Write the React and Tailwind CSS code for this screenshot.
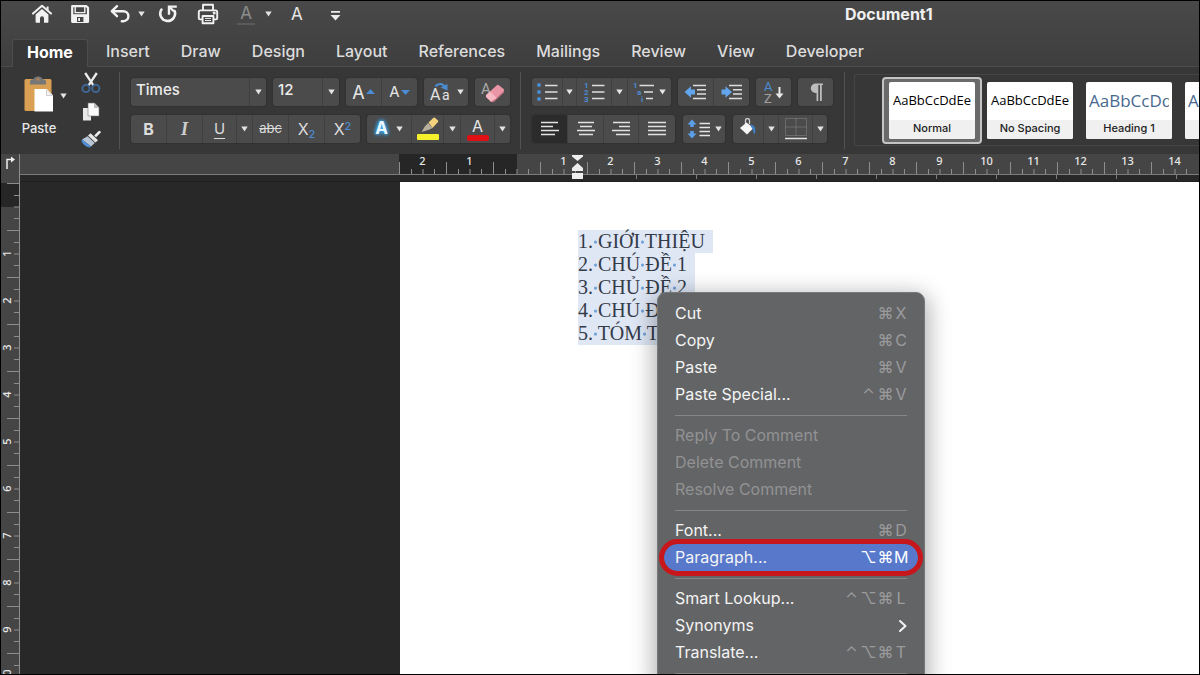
import { clsx } from 'clsx'

const tabs = ['Insert', 'Draw', 'Design', 'Layout', 'References', 'Mailings', 'Review', 'View', 'Developer']

const lines = ['1. GIỚI THIỆU', '2. CHÚ ĐỀ 1', '3. CHỦ ĐỀ 2', '4. CHÚ ĐỀ 3', '5. TÓM TẮT']

const menu = [
  [
    { label: 'Cut', keys: ['⌘', 'X'] },
    { label: 'Copy', keys: ['⌘', 'C'] },
    { label: 'Paste', keys: ['⌘', 'V'] },
    { label: 'Paste Special...', keys: ['⌃', '⌘', 'V'] },
  ],
  [
    { label: 'Reply To Comment', disabled: true },
    { label: 'Delete Comment', disabled: true },
    { label: 'Resolve Comment', disabled: true },
  ],
  [
    { label: 'Font...', keys: ['⌘', 'D'] },
    { label: 'Paragraph...', keys: ['⌥', '⌘', 'M'], active: true },
  ],
  [
    { label: 'Smart Lookup...', keys: ['⌃', '⌥', '⌘', 'L'] },
    { label: 'Synonyms', submenu: true },
    { label: 'Translate...', keys: ['⌃', '⌥', '⌘', 'T'] },
  ],
]

const styles = [
  { name: 'Normal', selected: true },
  { name: 'No Spacing' },
  { name: 'Heading 1', heading: true },
  { name: 'Heading 2', heading: true },
]

function Caret() {
  return (
    <svg width="7" height="6" viewBox="0 0 7 6" className="shrink-0" fill="#e4e4e4">
      <path d="M0.3 0.5h6.4L3.5 5.6z" />
    </svg>
  )
}

function Group({ children, className }) {
  return (
    <div className={clsx('flex h-7 divide-x divide-[#404040] overflow-hidden rounded-[3px] bg-[#4b4b4b] shadow-[0_0_1px_1px_#323232]', className)}>
      {children}
    </div>
  )
}

function Tool({ label, className, children }) {
  return (
    <button type="button" aria-label={label} className={clsx('flex h-7 items-center justify-center', className)}>
      {children}
    </button>
  )
}

/* ---------- quick access icons ---------- */

function HomeIcon() {
  return (
    <svg width="20" height="20" viewBox="0 0 20 20" fill="#f2f2f2">
      <path d="M1 9.6 10 1.8l9 7.8" fill="none" stroke="#f2f2f2" strokeWidth="2" strokeLinecap="round" strokeLinejoin="round" />
      <path d="M3.6 10.6 10 5l6.4 5.6V18a.8.8 0 0 1-.8.8H12v-4.6a2 2 0 0 0-4 0v4.6H4.4a.8.8 0 0 1-.8-.8z" />
      <path d="M14.6 2.6h2v4l-2-1.8z" />
    </svg>
  )
}

function SaveIcon() {
  return (
    <svg width="20" height="20" viewBox="0 0 20 20" fill="none" stroke="#f2f2f2">
      <path d="M2.2 2.2h14.2l1.6 1.6v14H2.2z" strokeWidth="2.2" strokeLinejoin="round" />
      <path d="M3 10.2h14v7.4H3z" fill="#f2f2f2" stroke="none" />
      <path d="M5.2 3v5.6h9.6V3" strokeWidth="1.4" />
      <path d="M7 13h6.4v5H7z" fill="#464646" stroke="none" />
      <path d="M8.2 14h1.8v3H8.2z" fill="#f2f2f2" stroke="none" />
    </svg>
  )
}

function UndoIcon() {
  return (
    <svg width="20" height="20" viewBox="0 0 20 20" fill="none" stroke="#f2f2f2" strokeWidth="2.4" strokeLinecap="round">
      <path d="M7 2.2 1.8 7.2 7 12.2" strokeLinejoin="round" />
      <path d="M2.4 7.2h11a5 5 0 0 1 0 10h-1.6" />
    </svg>
  )
}

function RedoIcon() {
  return (
    <svg width="20" height="20" viewBox="0 0 20 20" fill="none" stroke="#f2f2f2" strokeWidth="2.6">
      <path d="M3.4 5.6a7.400 7.400 0 1 0 13.200 1.400" strokeLinecap="round" />
      <path d="M11 10.800V2.600h7.800" strokeWidth="2.4" />
      <path d="M11.400 3 16 7.400" strokeWidth="2.2" />
    </svg>
  )
}

function PrinterIcon() {
  return (
    <svg width="22" height="22" viewBox="0 0 22 22" fill="none" stroke="#f2f2f2" strokeWidth="1.9" strokeLinejoin="round">
      <path d="M6 7V1.8h10V7" />
      <path d="M5.4 16.4H3A1.2 1.2 0 0 1 1.8 15.2V9A1.6 1.6 0 0 1 3.4 7.4h15.2A1.6 1.6 0 0 1 20.2 9v6.2a1.2 1.2 0 0 1-1.2 1.200h-2.400" />
      <path d="M5.600 13h10.800v7.200H5.600z" />
      <path d="M8 15.400h6M8 17.600h6" strokeWidth="1" />
      <circle cx="17.200" cy="10" r=".6" fill="#f2f2f2" />
    </svg>
  )
}

/* ---------- ribbon icons ---------- */

function PasteIcon() {
  return (
    <svg width="30" height="36" viewBox="0 0 30 36">
      <rect x="0.500" y="3" width="27" height="32" rx="1.500" fill="#d9a054" />
      <path d="M6 8.500V5.600C6 4 7 3.400 9 3.200 10 3.200 10.200.5 14 .5s4 2.700 5 2.700c2 .2 3 .8 3 2.400v2.900z" fill="#777" />
      <circle cx="14" cy="3.400" r="1.300" fill="#b5864c" />
      <path d="M10.500 13h12.300l6.200 6.200V35.500H10.500z" fill="#fff" />
      <path d="M22 13v7h7z" fill="#cfcfcf" />
      <path d="M23 14.800v4.200h4.200z" fill="#f5f5f5" />
    </svg>
  )
}

function CutIcon() {
  return (
    <svg width="20" height="22" viewBox="0 0 20 22" fill="none">
      <path d="M4.200 1 12.600 13.600M15.800 1 7.400 13.600" stroke="#ececec" strokeWidth="2.300" />
      <circle cx="5" cy="16.400" r="3.600" stroke="#3f6694" strokeWidth="2" />
      <circle cx="14.800" cy="16.400" r="3.600" stroke="#3f6694" strokeWidth="2" />
    </svg>
  )
}

function CopyIcon() {
  return (
    <svg width="18" height="20" viewBox="0 0 18 20">
      <path d="M1 6h8v12.500H1z" fill="#e8e8e8" />
      <path d="M6 1h6.400L17 5.600V14H6z" fill="#fafafa" stroke="#777" strokeWidth=".6" />
      <path d="M12 1v5h5z" fill="#bdbdbd" />
    </svg>
  )
}

function FormatPainterIcon() {
  return (
    <svg width="20" height="18" viewBox="0 0 20 18">
      <path d="M13.200 5.400 17.400 1.200a1.300 1.300 0 0 1 1.900 1.900l-4.200 4.200z" fill="#f0f0f0" />
      <path d="M9.600 3.200 17 10.200l-2.600 2.400L7 5.600z" fill="#e6e6e6" />
      <path d="M6.600 6.200 13.800 13 10 16.400 1 9.600z" fill="#b9c6d6" />
      <path d="M1 9.600 10 16.400 8.400 17.600C5 17.200 2.400 14.600.6 11.600z" fill="#4f8fd8" />
    </svg>
  )
}

function EraserIcon() {
  return (
    <svg width="26" height="22" viewBox="0 0 26 22">
      <text x="1" y="13" fontSize="15" fill="#a9a9a9" fontFamily="Roboto, sans-serif">A</text>
      <path d="M6.600 13.600 16.600 4.400a2 2 0 0 1 2.600 0l4.400 3.600a1.600 1.600 0 0 1 0 2.400L13.400 20.200a2 2 0 0 1-2.600.2L6.600 16.600a2 2 0 0 1 0-3z" fill="#e995a5" />
      <path d="M6.600 13.600 10 10.400l6.800 6.600-3.400 3.200a2 2 0 0 1-2.600.2L6.600 16.600a2 2 0 0 1 0-3z" fill="#f6b9c4" />
      <path d="M16.800 17 24 10v1.600l-10.400 9.600-2.600-.6z" fill="#c87485" />
    </svg>
  )
}

function ListIcon({ kind }) {
  return (
    <svg width="22" height="22" viewBox="0 0 22 22">
      {kind === 'bullets' && (
        <g fill="#4b8bd2">
          <circle cx="3" cy="4" r="2" />
          <circle cx="3" cy="11" r="2" />
          <circle cx="3" cy="18" r="2" />
        </g>
      )}
      {kind === 'numbers' && (
        <g fill="#4b8bd2" fontSize="8" fontWeight="700" fontFamily="Roboto, sans-serif">
          <text x="1" y="7">1</text>
          <text x="1" y="14">2</text>
          <text x="1" y="21">3</text>
        </g>
      )}
      <path d="M9 4.500h12.500M9 11h12.500M9 17.500h12.500" stroke="#dedede" strokeWidth="1.600" />
    </svg>
  )
}

function MultiListIcon() {
  return (
    <svg width="22" height="22" viewBox="0 0 22 22">
      <g fill="#4b8bd2" fontSize="8" fontWeight="700" fontFamily="Roboto, sans-serif">
        <text x="0" y="7">1</text>
        <text x="4" y="14">a</text>
        <text x="8" y="21">i</text>
      </g>
      <path d="M6.500 4.500H21M11 11h9M13 17.500h7" stroke="#dedede" strokeWidth="1.600" />
    </svg>
  )
}

function IndentIcon({ right }) {
  return (
    <svg width="24" height="18" viewBox="0 0 24 18">
      <path d="M9 2.500h13M13 6.800h9M13 11.100h9M9 15.400h13" stroke="#dedede" strokeWidth="1.500" />
      {right ? (
        <path d="M1.500 6.500h4V3.300L12 9l-6.500 5.700v-3.200h-4z" fill="#62a5ec" />
      ) : (
        <path d="M11 6.500H7V3.300L.5 9 7 14.700v-3.200h4z" fill="#62a5ec" />
      )}
    </svg>
  )
}

function AlignIcon({ d }) {
  return (
    <svg width="20" height="16" viewBox="0 0 20 16" fill="none" stroke="#e2e2e2" strokeWidth="1.300">
      <path d={d} />
    </svg>
  )
}

function SpacingIcon() {
  return (
    <svg width="24" height="20" viewBox="0 0 24 20">
      <path d="M5 .5 9.500 5.500H6.800V8H3.200V5.500H.5zM5 19.500 9.500 14.500H6.800V12H3.200v2.500H.5z" fill="#5b9fe8" />
      <path d="M12.500 4.500H23M12.500 8.500H23M12.500 12.500H23M12.500 16.500H23" stroke="#e6e6e6" strokeWidth="1.500" />
    </svg>
  )
}

function SortIcon() {
  return (
    <svg width="22" height="26" viewBox="0 0 22 26">
      <text x="1" y="12" fontSize="13" fill="#4b8bd2" fontFamily="Roboto, sans-serif">A</text>
      <text x="1" y="24" fontSize="13" fill="#a0a0a0" fontFamily="Roboto, sans-serif">Z</text>
      <path d="M16.500 8v9" stroke="#e8e8e8" strokeWidth="2" />
      <path d="M12.500 14.500h8l-4 5z" fill="#e8e8e8" />
    </svg>
  )
}

function HighlighterIcon() {
  return (
    <svg width="24" height="24" viewBox="0 0 24 24">
      <path d="M12.500 5.500 17.500.8a1 1 0 0 1 1.400 0L22 3.600a1 1 0 0 1 0 1.400l-5.500 6z" fill="#f5d27c" />
      <path d="M12 6 16.500 11l-3.600 1.800L5.500 15l3.300-5.500z" fill="#b8b09c" />
      <rect x="1" y="17" width="22" height="6" rx="1" fill="#f6f02c" />
    </svg>
  )
}

function FillIcon() {
  return (
    <svg width="20" height="22" viewBox="0 0 20 22">
      <path d="M7.500 7V2.500a2 2 0 0 1 4 0V6" fill="none" stroke="#cfcfcf" strokeWidth="1.300" />
      <path d="M8.500 4.500 15.500 10 9 16.500 2 10z" fill="#f7f7f7" />
      <path d="M12.500 6.500C17 7 18.500 11 16.500 16.500 14.500 14 15.500 11 13 9z" fill="#3f7fc4" />
    </svg>
  )
}

function BordersIcon() {
  return (
    <svg width="24" height="24" viewBox="0 0 24 24" fill="none" stroke="#8b8b8b">
      <path d="M1.500 1.500h21v17h-21zM12 1.500v17M1.500 10h21" strokeDasharray="1 1" />
      <path d="M1 21.500h22" stroke="#e2e2e2" strokeWidth="1.600" />
    </svg>
  )
}

/* ---------- rulers ---------- */

function RulerCell({ n }) {
  return (
    <div className={clsx('flex h-5 w-[47px] shrink-0 flex-col items-center', n < 0 && 'bg-[#262626]', n === 0 && 'bg-linear-to-r from-[#262626] from-50% to-[#454545] to-50%')}>
      <span className="h-3 text-[11px] leading-[14px] font-medium text-[#e8e8e8]">{n !== 0 && Math.abs(n)}</span>
      <svg width="47" height="12" viewBox="0 0 47 12" className="-mt-1" stroke="#8e8e8e" fill="none">
        <path d="M.5 0v12M12.500 7v5M24 7v5M35.500 7v5" />
      </svg>
    </div>
  )
}

function SideCell({ n }) {
  return (
    <div className={clsx('flex h-[47px] shrink-0 items-center', n === 0 && 'bg-linear-to-b from-[#262626] from-50% to-[#454545] to-50%')}>
      <span className="w-[11px] -rotate-90 text-center text-[11px] leading-[11px] font-medium text-[#e8e8e8]">{n !== 0 && n}</span>
      <svg width="7" height="47" viewBox="0 0 7 47" className="overflow-visible" stroke="#8e8e8e">
        <path d="M-5 .5H7M2 12.500h5M2 24h5M2 35.500h5" />
      </svg>
    </div>
  )
}

/* ---------- context menu ---------- */

function MenuItem({ item }) {
  return (
    <button
      type="button"
      role="menuitem"
      disabled={item.disabled}
      className={clsx(
        'flex h-[27px] items-center justify-between rounded-full pr-2.5 pl-[11px] text-[16px] leading-[27px]',
        item.disabled ? 'text-[#929294]' : 'text-[#f4f4f4]',
        item.active && 'relative z-10 bg-[#5878cb] outline-5 outline-[#c8161d]'
      )}
    >
      <span>{item.label}</span>
      {item.keys && (
        <span className={clsx('flex', item.active ? 'text-white' : 'text-[#9b9b9d]')}>
          {item.keys.map((k) => (
            <span key={k} className="w-[17px] text-center last:w-3.5">{k}</span>
          ))}
        </span>
      )}
      {item.submenu && (
        <svg width="10" height="14" viewBox="0 0 10 14" fill="none" stroke="#f4f4f4" strokeWidth="2" strokeLinecap="round" strokeLinejoin="round">
          <path d="M2 2l5.500 5L2 12" />
        </svg>
      )}
    </button>
  )
}

function ContextMenu() {
  return (
    <div role="menu" className="absolute top-[110px] left-[257px] flex w-[268px] flex-col rounded-[9px] border border-[#77787a] bg-[#636466] px-[6px] py-[7px] shadow-[0_6px_22px_4px_rgba(0,0,0,0.3)]">
      {menu.map((section) => (
        <div key={section[0].label} className="flex flex-col">
          {section.map((item) => <MenuItem key={item.label} item={item} />)}
          <div className="flex h-3.5 items-center px-[11px]">
            <div className="h-px flex-1 bg-[#858688]" />
          </div>
        </div>
      ))}
    </div>
  )
}

function DocumentLine({ text }) {
  const words = text.split(' ')
  return (
    <div className="w-fit bg-[#dfe7f5] pr-2">
      {words.map((word, i) => (
        <span key={i}>
          {i > 0 && <span className="bg-[radial-gradient(circle_at_50%_55%,#6fa0d8_1px,transparent_2px)]"> </span>}
          {word}
        </span>
      ))}
    </div>
  )
}

export default function App() {
  return (
    <div className="flex h-screen flex-col overflow-hidden border border-black bg-[#282828] font-['Inter',sans-serif] text-[#e6e6e6]">
      {/* Title bar and tabs */}
      <header className="bg-linear-to-b from-[#494949] to-[#3e3e3e]">
        <div className="flex h-[38px] items-start pt-px">
          <div className="flex h-6 flex-1 items-center pl-[31px]">
            <button type="button" aria-label="Home" className="mr-[18px]"><HomeIcon /></button>
            <button type="button" aria-label="Save" className="mr-5"><SaveIcon /></button>
            <button type="button" aria-label="Undo" className="mr-2"><UndoIcon /></button>
            <button type="button" aria-label="Undo history" className="mr-[13px]"><Caret /></button>
            <button type="button" aria-label="Redo" className="mr-[19px]"><RedoIcon /></button>
            <button type="button" aria-label="Print" className="mr-[18px]"><PrinterIcon /></button>
            <button type="button" aria-label="Font color" className="mr-2.5 w-[18px] border-b-2 border-[#5a5a5a] text-[17px] leading-5 text-[#8d8d8d]">A</button>
            <button type="button" aria-label="Font color options" className="mr-[19px]"><Caret /></button>
            <button type="button" aria-label="Font" className="mr-[27px] text-[17px] leading-5">A</button>
            <button type="button" aria-label="Customize toolbar" className="pt-1">
              <svg width="11" height="11" viewBox="0 0 11 11" fill="#ececec"><path d="M1 0h9v1.800H1zM.5 4h10L5.500 9.500z" /></svg>
            </button>
          </div>
          <h1 className="w-[354px] text-[16px] leading-6 font-bold text-[#f0f0f0]">Document1</h1>
        </div>
        <nav className="flex h-7 items-stretch border-b border-[#4d4d4d] pl-[11px] text-[16px] leading-6 font-medium">
          <button type="button" className="-mb-px rounded-t-[3px] border border-b-0 border-[#4d4d4d] bg-[#373737] px-3.5 pb-1 font-bold text-white">Home</button>
          <div className="flex gap-[31px] pl-[18px]">
            {tabs.map((t) => <button type="button" key={t} className="pb-[3px] text-[#dcdcdc]">{t}</button>)}
          </div>
        </nav>
      </header>

      {/* Ribbon */}
      <section className="flex h-[87px] shrink-0 overflow-hidden bg-[#373737]">
        <div className="flex w-[118px] shrink-0 pt-[5px] pl-[17px]">
          <button type="button" className="mt-1 flex w-[42px] flex-col items-center justify-start text-[13px] leading-5 font-medium">
            <PasteIcon />
            <span className="pt-[6px]">Paste</span>
          </button>
          <button type="button" aria-label="Paste options" className="mt-4 h-4"><Caret /></button>
          <div className="ml-3.5 flex flex-col items-center gap-2">
            <button type="button" aria-label="Cut"><CutIcon /></button>
            <button type="button" aria-label="Copy"><CopyIcon /></button>
            <button type="button" aria-label="Format painter"><FormatPainterIcon /></button>
          </div>
        </div>
        <div className="my-[5px] w-px bg-[#525252]" />

        <div className="flex shrink-0 flex-col gap-[9px] pt-[11px] pr-2.5 pl-[11px]">
          <div className="flex gap-[7px]">
            <Group className="w-[135px]">
              <select aria-label="Font name" className="min-w-0 flex-1 appearance-none bg-transparent pb-[3px] pl-[5px] text-[15px] font-medium text-[#ededed]">
                <option>Times</option>
              </select>
              <span className="flex w-4 items-center justify-center"><Caret /></span>
            </Group>
            <Group className="w-[66px]">
              <select aria-label="Font size" className="min-w-0 flex-1 appearance-none bg-transparent pb-[3px] pl-[5px] text-[15px] font-medium text-[#ededed]">
                <option>12</option>
              </select>
              <span className="flex w-4 items-center justify-center"><Caret /></span>
            </Group>
            <Group>
              <Tool label="Grow font" className="w-9 gap-px text-[18px]">
                A<svg width="9" height="6" viewBox="0 0 9 6" fill="#4b8bd2"><path d="M0 5 4.500 0 9 5z" /></svg>
              </Tool>
              <Tool label="Shrink font" className="w-[35px] gap-px text-[15px]">
                A<svg width="9" height="6" viewBox="0 0 9 6" fill="#4b8bd2"><path d="M0 1 4.500 6 9 1z" /></svg>
              </Tool>
            </Group>
            <Group>
              <Tool label="Change case" className="w-11 gap-1">
                <svg width="24" height="22" viewBox="0 0 24 22">
                  <text x="1" y="19" fontSize="16" fill="#e4e4e4" fontFamily="Roboto, sans-serif">A</text>
                  <text x="13" y="19" fontSize="14" fill="#e4e4e4" fontFamily="Roboto, sans-serif">a</text>
                  <path d="M6.500 5.500C9 2 14 2 16 6.500" fill="none" stroke="#4b8bd2" strokeWidth="2.200" />
                  <path d="M11.500 6.500 18.500 3v6.500z" fill="#4b8bd2" />
                </svg>
                <Caret />
              </Tool>
            </Group>
            <Group>
              <Tool label="Clear formatting" className="w-[35px]"><EraserIcon /></Tool>
            </Group>
          </div>
          <div className="flex gap-[7px]">
            <Group>
              <Tool label="Bold" className="w-9 text-[16px] font-bold text-[#dcdcdc]">B</Tool>
              <Tool label="Italic" className="w-9 font-['Liberation_Serif',serif] text-[18px] font-bold italic text-[#cfcfcf]">I</Tool>
              <Tool label="Underline" className="w-[34px] text-[15px] text-[#dcdcdc] underline underline-offset-4">U</Tool>
              <Tool label="Underline options" className="w-4"><Caret /></Tool>
              <Tool label="Strikethrough" className="w-9 text-[13px] text-[#dcdcdc] line-through">abc</Tool>
              <Tool label="Subscript" className="w-9 text-[16px] text-[#dcdcdc]">
                <span>X<sub className="text-[11px] font-medium text-[#4b8bd2]">2</sub></span>
              </Tool>
              <Tool label="Superscript" className="w-[35px] text-[16px] text-[#dcdcdc]">
                <span>X<sup className="text-[11px] font-medium text-[#4b8bd2]">2</sup></span>
              </Tool>
            </Group>
            <Group>
              <Tool label="Text effects" className="w-[45px] gap-2 text-[17px] font-bold text-[#e9f7ff]">
                <span className="[text-shadow:0_0_3px_#37a7ee,0_0_4px_#37a7ee,0_0_5px_#37a7ee]">A</span>
                <Caret />
              </Tool>
              <Tool label="Highlight" className="w-8"><HighlighterIcon /></Tool>
              <Tool label="Highlight colors" className="w-[17px]"><Caret /></Tool>
              <Tool label="Font color" className="w-[34px] flex-col text-[16px] leading-[17px]">
                A<span className="h-[6px] w-[22px] rounded-[2px] bg-[#e01015]" />
              </Tool>
              <Tool label="Font colors" className="w-[15px]"><Caret /></Tool>
            </Group>
          </div>
        </div>
        <div className="my-[5px] w-px bg-[#525252]" />

        <div className="flex shrink-0 flex-col gap-[9px] px-[11px] pt-[11px]">
          <div className="flex gap-[7px]">
            <Group>
              <Tool label="Bullets" className="w-[31px]"><ListIcon kind="bullets" /></Tool>
              <Tool label="Bullet options" className="w-[14px]"><Caret /></Tool>
              <Tool label="Numbering" className="w-[35px]"><ListIcon kind="numbers" /></Tool>
              <Tool label="Numbering options" className="w-4"><Caret /></Tool>
              <Tool label="Multilevel list" className="w-[43px] gap-1"><MultiListIcon /><Caret /></Tool>
            </Group>
            <Group>
              <Tool label="Decrease indent" className="w-9"><IndentIcon /></Tool>
              <Tool label="Increase indent" className="w-[35px]"><IndentIcon right /></Tool>
            </Group>
            <Group><Tool label="Sort" className="w-[35px]"><SortIcon /></Tool></Group>
            <Group>
              <Tool label="Show marks" className="w-[35px]">
                <svg width="16" height="20" viewBox="0 0 16 20" fill="#bcbcbc">
                  <path d="M7.500 1.500H15V3h-1.200v16h-1.800V3h-1.700v16H8.500V11H7.500a4.750 4.750 0 0 1 0-9.500z" />
                </svg>
              </Tool>
            </Group>
          </div>
          <div className="flex gap-2">
            <Group>
              <Tool label="Align left" className="w-9 bg-[#2b2b2b]"><AlignIcon d="M1 1.500h17M1 5.500h12M1 9.500h18M1 13.500h14" /></Tool>
              <Tool label="Align center" className="w-9"><AlignIcon d="M2 1.500h16M4 5.500h12M1 9.500h18M3 13.500h14" /></Tool>
              <Tool label="Align right" className="w-[35px]"><AlignIcon d="M2 1.500h17M8 5.500h11M1 9.500h18M5 13.500h14" /></Tool>
              <Tool label="Justify" className="w-9"><AlignIcon d="M1 1.500h18M1 5.500h18M1 9.500h18M1 13.500h18" /></Tool>
            </Group>
            <Group><Tool label="Line spacing" className="w-[42px] gap-1"><SpacingIcon /><Caret /></Tool></Group>
            <Group>
              <Tool label="Shading" className="w-[31px]"><FillIcon /></Tool>
              <Tool label="Shading options" className="w-[15px]"><Caret /></Tool>
              <Tool label="Borders" className="w-[34px]"><BordersIcon /></Tool>
              <Tool label="Border options" className="w-[14px]"><Caret /></Tool>
            </Group>
          </div>
        </div>
        <div className="my-[5px] w-px bg-[#525252]" />

        <div className="mt-[7px] mb-2 ml-[9px] flex min-w-0 flex-1 gap-[5px] overflow-hidden rounded-l-[3px] border border-r-0 border-[#454545] pt-[2px] pl-[27px]">
          {styles.map((s) => (
            <button
              type="button"
              key={s.name}
              className={clsx('flex h-[67px] shrink-0 rounded-[4px]', s.selected ? 'border-2 border-[#c4c4c4] bg-[#6a6a6a] px-[5px] py-[3px]' : 'py-[5px] pr-2')}
            >
              <span className="flex h-[57px] w-[86px] flex-col overflow-hidden rounded-[2px] bg-white">
                <span className={clsx("flex h-[38px] items-center overflow-hidden font-['Open_Sans',sans-serif] whitespace-nowrap", s.heading ? 'mx-[3px] text-[17px] text-[#48698f]' : 'justify-center text-[13px] text-black')}>
                  AaBbCcDdEe
                </span>
                <span className="flex-1 bg-[#f0f0f0] text-[11px] leading-[17px] font-medium text-[#222]">{s.name}</span>
              </span>
            </button>
          ))}
        </div>
      </section>

      {/* Horizontal ruler */}
      <div className="flex shrink-0 font-['Noto_Sans',sans-serif]">
        <div className="flex h-7 w-[19px] shrink-0 justify-center border-r border-[#8e8e8e] bg-[#454545]">
          <svg width="11" height="15" viewBox="0 0 11 15" fill="none" stroke="#f0f0f0" strokeWidth="1.500" className="mt-px">
            <path d="M2 14V4.500h5" />
            <path d="M6 1.500v6l4-3z" fill="#f0f0f0" stroke="none" />
          </svg>
        </div>
        <div className="relative min-w-0 flex-1 overflow-hidden border-b border-[#1f1f1f]">
          <div className="flex h-[21px] border-b border-[#7b7b7b] bg-[#454545]">
            <div className="w-[379px] shrink-0" />
            {[-2, -1, 0, 1, 2, 3, 4, 5, 6, 7, 8, 9, 10, 11, 12, 13, 14].map((n) => <RulerCell key={n} n={n} />)}
          </div>
          {/* default tab stops */}
          <div className="flex h-[6px] gap-[59px] pl-[616px]">
            {[0, 1, 2, 3, 4, 5, 6, 7, 8, 9].map((n) => <span key={n} className="h-1 w-px shrink-0 bg-[#7b7b7b]" />)}
          </div>
          <svg width="11" height="26" viewBox="0 0 11 26" fill="#ededed" className="absolute top-0 left-[552px]">
            <path d="M0 1h11v1.500L5.500 7 0 2.500zM0 17v-3l5.500-5L11 14v3zM0 19h11v6H0z" />
          </svg>
        </div>
      </div>

      {/* Workspace */}
      <div className="flex min-h-0 flex-1">
        <div className="flex w-[19px] shrink-0 flex-col overflow-hidden border-r border-[#8e8e8e] bg-[#454545] pt-px font-['Noto_Sans',sans-serif]">
          {[0, 1, 2, 3, 4, 5, 6, 7, 8, 9, 10].map((n) => <SideCell key={n} n={n} />)}
        </div>
        <div className="w-[380px] shrink-0" />
        <main className="relative min-w-0 flex-1 overflow-hidden bg-white pt-12 pl-[178px] font-['Liberation_Serif',serif] text-[20px] leading-[23px] text-[#333a48]">
          {lines.map((l) => <DocumentLine key={l} text={l} />)}
          <div className="font-['Inter',sans-serif]"><ContextMenu /></div>
        </main>
      </div>
    </div>
  )
}
